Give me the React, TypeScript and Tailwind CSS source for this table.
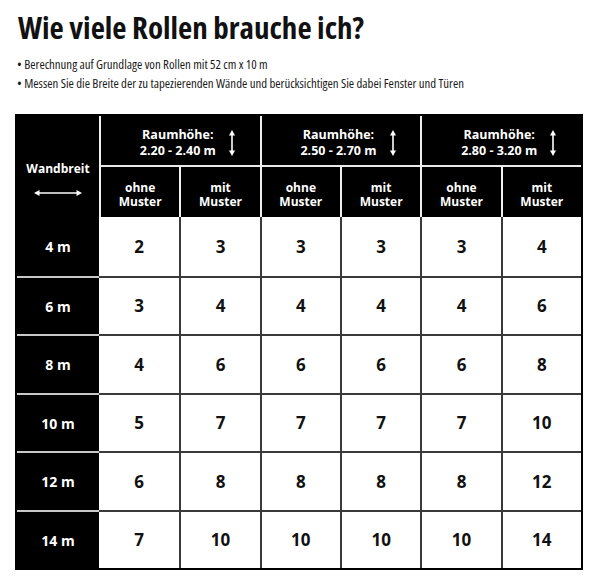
import React from 'react';

const ranges = ['2.20 - 2.40 m', '2.50 - 2.70 m', '2.80 - 3.20 m'];

const rows: { wall: string; values: number[] }[] = [
  { wall: '4 m', values: [2, 3, 3, 3, 3, 4] },
  { wall: '6 m', values: [3, 4, 4, 4, 4, 6] },
  { wall: '8 m', values: [4, 6, 6, 6, 6, 8] },
  { wall: '10 m', values: [5, 7, 7, 7, 7, 10] },
  { wall: '12 m', values: [6, 8, 8, 8, 8, 12] },
  { wall: '14 m', values: [7, 10, 10, 10, 10, 14] },
];

function VArrow() {
  return (
    <svg width="10" height="26" viewBox="0 0 10 26" className="shrink-0">
      <line x1="5" y1="4" x2="5" y2="22" stroke="white" strokeWidth="1.6" />
      <polygon points="5,0 2,5.5 8,5.5" fill="white" />
      <polygon points="5,26 2,20.5 8,20.5" fill="white" />
    </svg>
  );
}

function HArrow() {
  return (
    <svg width="48" height="8" viewBox="0 0 48 8">
      <line x1="4" y1="4" x2="44" y2="4" stroke="white" strokeWidth="1.4" />
      <polygon points="0,4 5.5,1 5.5,7" fill="white" />
      <polygon points="48,4 42.5,1 42.5,7" fill="white" />
    </svg>
  );
}

export default function App() {
  return (
    <div className="w-[600px] h-[579px] bg-white text-black font-['Open_Sans',sans-serif] overflow-hidden">
      {/* Titel */}
      <h1 className="pl-[18px] pt-[9px] text-[31px] leading-[36px] font-bold font-stretch-condensed text-[#111]">
        Wie viele Rollen brauche ich?
      </h1>

      <div className="pl-[17px] mt-[10px] text-[12.8px] leading-[19px] font-stretch-condensed text-[#1a1a1a]">
        <p>• Berechnung auf Grundlage von Rollen mit 52 cm x 10 m</p>
        <p>• Messen Sie die Breite der zu tapezierenden Wände und berücksichtigen Sie dabei Fenster und Türen</p>
      </div>

      {/* Tabelle */}
      <div className="ml-[15px] mt-[21px] w-[568px] border-2 border-black">
        <div className="grid grid-cols-[82px_repeat(6,minmax(0,1fr))] font-bold">
          {/* Kopfzeile */}
          <div className="row-span-2 bg-black text-white flex flex-col items-center pt-[45px] gap-[13px]">
            <span className="text-[12px] leading-[15px]">Wandbreit</span>
            <HArrow />
          </div>
          {ranges.map(r => (
            <div
              key={r}
              className="col-span-2 h-[51px] bg-black text-white border-l-2 border-l-[#f0f0f0] border-b-2 border-b-[#e8e8e8] flex items-center justify-center gap-[11px] pl-[16px] pt-[5px]"
            >
              <div className="text-center text-[12.5px] leading-[16px]">
                <div>Raumhöhe:</div>
                <div>{r}</div>
              </div>
              <VArrow />
            </div>
          ))}
          {ranges.map(r =>
            ['ohne', 'mit'].map(k => (
              <div
                key={r + k}
                className="h-[50px] bg-black text-white border-l-2 border-l-[#f0f0f0] flex flex-col items-center justify-center pt-[5px] text-[12px] leading-[13.5px]"
              >
                <span>{k}</span>
                <span>Muster</span>
              </div>
            ))
          )}

          {/* Daten */}
          {rows.map((row, ri) => (
            <React.Fragment key={row.wall}>
              <div
                className={`bg-black text-white flex items-center justify-center text-[14px] ${
                  ri === 0 ? '' : 'border-t-2 border-t-[#c8c8c8]'
                } ${ri % 2 === 0 ? 'h-[59px]' : 'h-[58px]'}`}
              >
                {row.wall}
              </div>
              {row.values.map((v, ci) => (
                <div
                  key={ci}
                  className={`bg-white flex items-center justify-center text-[17px] text-[#111] ${
                    ci === 0 ? '' : 'border-l-2 border-l-[#3a3a3a]'
                  } ${ri === 0 ? '' : 'border-t-2 border-t-[#3a3a3a]'}`}
                >
                  {v}
                </div>
              ))}
            </React.Fragment>
          ))}
        </div>
      </div>
    </div>
  );
}
